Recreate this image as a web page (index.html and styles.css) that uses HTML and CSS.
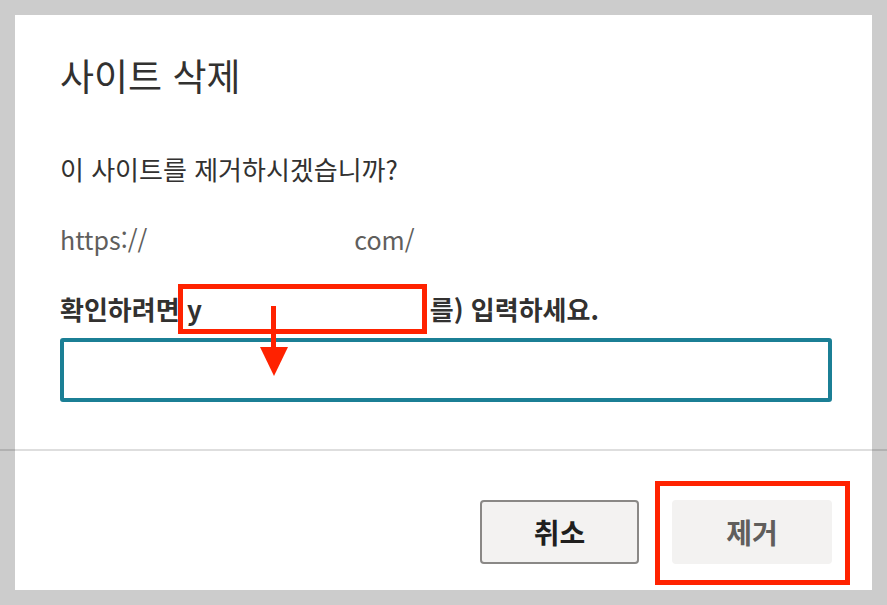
FILE: index.html
```html
<!DOCTYPE html>
<html lang="ko">
<head>
    <meta charset="UTF-8">
    <title>사이트 삭제</title>
    <link rel="stylesheet" href="styles.css">
</head>
<body>
    <div class="dialog">
        <div class="body">
            <h1 class="title">사이트 삭제</h1>
            <p class="question">이 사이트를 제거하시겠습니까?</p>
            <p class="url">https://<span class="blank url-blank"></span>com/</p>
            <label class="confirm" for="confirmInput">확인하려면 y<span class="blank label-blank"></span>를) 입력하세요.</label>
            <input type="text" id="confirmInput" class="confirm-input">
        </div>
        <div class="divider"></div>
        <div class="footer">
            <button type="button" class="btn">취소</button>
            <button type="button" class="btn disabled">제거</button>
        </div>

        <!-- annotations -->
        <div class="mark mark-label"></div>
        <div class="mark mark-remove"></div>
        <svg class="arrow" width="28" height="70" viewBox="0 0 28 70">
            <rect x="11" y="0" width="5" height="44" fill="#ff2200"/>
            <polygon points="0,41 28,41 14,70" fill="#ff2200"/>
        </svg>
    </div>
</body>
</html>
```

FILE: styles.css
```css
body {
    margin: 0;
    padding: 15px;
    background-color: #cccccc;
    font-family: "Noto Sans CJK KR", "Noto Sans", sans-serif;
    color: #323130;
}

.dialog {
    position: relative;
    width: 857px;
    height: 575px;
    background-color: white;
}

.body {
    padding: 34px 40px 0 45px;
}

.title {
    margin: 0;
    font-size: 37px;
    font-weight: 400;
    line-height: 52px;
}

.question {
    margin: 50px 0 0;
    font-size: 26px;
    line-height: 36px;
}

.url {
    margin: 34px 0 0;
    font-size: 25px;
    line-height: 36px;
    color: #605e5c;
}

.blank {
    display: inline-block;
}

.url-blank {
    width: 207px;
}

.label-blank {
    width: 228px;
}

.confirm {
    display: block;
    margin-top: 34px;
    font-size: 26px;
    font-weight: 700;
    line-height: 36px;
}

.confirm-input {
    display: block;
    box-sizing: border-box;
    width: 772px;
    height: 64px;
    margin-top: 11px;
    border: 4px solid #1b7f95;
    border-radius: 3px;
    outline: none;
}

.divider {
    height: 2px;
    margin: 47px -15px 0;
    background-color: rgba(0, 0, 0, 0.13);
}

.footer {
    display: flex;
    justify-content: flex-end;
    gap: 33px;
    padding: 49px 40px 0 0;
}

.btn {
    box-sizing: border-box;
    width: 159px;
    height: 64px;
    border: 2px solid #8a8886;
    border-radius: 4px;
    background-color: #f3f2f1;
    font-family: inherit;
    font-size: 28px;
    font-weight: 700;
    color: #201f1e;
}

.btn.disabled {
    width: 160px;
    border-color: #f3f2f1;
    color: #605e5c;
}

.mark {
    position: absolute;
    box-sizing: border-box;
    border: 5px solid #ff2200;
}

.mark-label {
    left: 163px;
    top: 269px;
    width: 249px;
    height: 50px;
}

.mark-remove {
    left: 640px;
    top: 466px;
    width: 195px;
    height: 104px;
}

.arrow {
    position: absolute;
    left: 245px;
    top: 291px;
}
```
